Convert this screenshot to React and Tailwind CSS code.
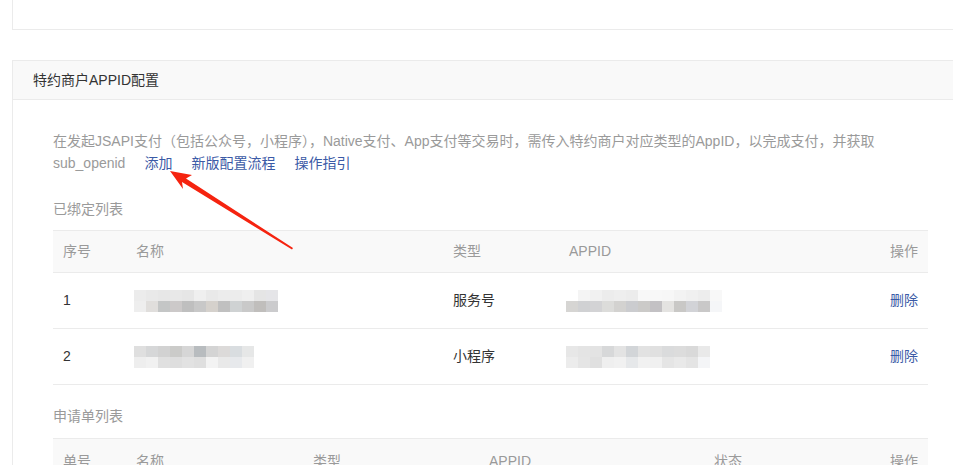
import React from 'react';

const mosaics = {
    name1: {
        top: ['#ececec', '#e9e9e9', '#e7e7e7', '#e8e8e8', '#e6e6e6', '#efefef', '#e9e9e9', '#ececec', '#ececec', '#efefef', '#e5e5e5', '#e5e5e8'],
        bottom: ['#eeeeee', '#e0dedc', '#c4c6c6', '#ccc9c9', '#bfbfbf', '#c8c8c8', '#d5d1cc', '#c0c0c0', '#cfd2d3', '#c9c9c9', '#c0bebc', '#cbcbcd'],
    },
    appid1: {
        top: ['#ffffff', '#f4f4f4', '#f1f1f1', '#ececec', '#eeeeee', '#ececec', '#f8f8f8', '#f8f8f8', '#f7f7f7', '#f3f3f3', '#f0f0f0', '#ededed', '#f8f8f8'],
        bottom: ['#d6d5d3', '#d0d1d3', '#d3d3d5', '#dcdcda', '#d3d2d0', '#cbcccf', '#cbcac8', '#c3c1c4', '#e4e3e1', '#c9c8c6', '#d2d3d7', '#c9c8c8', '#f5f6f8'],
    },
    name2: {
        top: ['#dfdfdf', '#d6d7d8', '#d2d2d2', '#cbcbc9', '#d6d6d6', '#b8bcbf', '#d4d4d4', '#dcdad9', '#d9dde0', '#e6e7e7'],
        bottom: ['#eeeeee', '#f1f1f1', '#e0e0e0', '#dedede', '#e2e2e2', '#dfdfdf', '#f3f3f3', '#e9e9e9', '#e7e9ec', '#f0f0f0'],
    },
    appid2: {
        top: ['#e7e7e7', '#e4e4e4', '#e3e3e3', '#d7d8d9', '#e3e3e3', '#d2d5d8', '#e2e2e2', '#e0e0e0', '#dadbdc', '#dcdcdc', '#d9d9d9', '#e9e9e9'],
        bottom: ['#ececec', '#e5e5e5', '#e0e0e0', '#efefef', '#f1f1f1', '#e6e8ea', '#f1f1f1', '#f0f0f0', '#e5e5e5', '#e9e9e9', '#e4e4e4', '#f4f5f7'],
    },
};

function Mosaic({ data }) {
    return (
        <div className="flex flex-col">
            {[data.top, data.bottom].map((row, i) => (
                <div key={i} className="flex">
                    {row.map((c, j) => (
                        <div key={j} className="w-[12px] h-[11px]" style={{ backgroundColor: c }} />
                    ))}
                </div>
            ))}
        </div>
    );
}

const bound = [
    { no: '1', name: mosaics.name1, type: '服务号', appid: mosaics.appid1 },
    { no: '2', name: mosaics.name2, type: '小程序', appid: mosaics.appid2 },
];

export default function App() {
    return (
        <div className="relative w-[953px] h-[465px] overflow-hidden bg-white text-[14px]" style={{ fontFamily: '"Liberation Sans", "Noto Sans CJK SC", sans-serif' }}>
            <div className="pl-[12px]">
                {/* previous card */}
                <div className="h-[30px] border-l border-b border-[#ebebeb] bg-white" />

                {/* APPID card */}
                <div className="mt-[30px] border-l border-t border-[#ebebeb] w-[960px]">
                    <div className="h-[39px] bg-[#f9f9f9] border-b border-[#ebebeb] flex items-center pl-[20px] text-[#333]">
                        特约商户APPID配置
                    </div>
                    <div className="pl-[40px] pt-[30px]">
                        <div className="w-[875px]">
                            <div className="leading-[22px] text-[#9a9a9a]">
                                <div>在发起JSAPI支付（包括公众号，小程序），Native支付、App支付等交易时，需传入特约商户对应类型的AppID，以完成支付，并获取</div>
                                <div className="flex gap-[19px]">
                                    <span>sub_openid</span>
                                    <a className="text-[#3b5aa6]">添加</a>
                                    <a className="text-[#3b5aa6]">新版配置流程</a>
                                    <a className="text-[#3b5aa6]">操作指引</a>
                                </div>
                            </div>

                            <div className="mt-[24px] leading-[22px] text-[#9a9a9a]">已绑定列表</div>
                            <div className="mt-[10px]">
                                <div className="flex items-center h-[43px] bg-[#f9f9f9] border-t border-b border-[#ebebeb] text-[#9a9a9a]">
                                    <div className="w-[73px] pl-[10px]">序号</div>
                                    <div className="w-[317px] pl-[10px]">名称</div>
                                    <div className="w-[116px] pl-[10px]">类型</div>
                                    <div className="w-[200px] pl-[10px]">APPID</div>
                                    <div className="flex-1 pr-[10px] text-right">操作</div>
                                </div>
                                {bound.map(row => (
                                    <div key={row.no} className="flex items-center h-[56px] border-b border-[#ebebeb] text-[#333]">
                                        <div className="w-[73px] pl-[10px]">{row.no}</div>
                                        <div className="w-[317px] pl-[8px]"><Mosaic data={row.name} /></div>
                                        <div className="w-[116px] pl-[10px]">{row.type}</div>
                                        <div className="w-[200px] pl-[7px]"><Mosaic data={row.appid} /></div>
                                        <div className="flex-1 pr-[10px] text-right text-[#3b5aa6]">删除</div>
                                    </div>
                                ))}
                            </div>

                            <div className="mt-[20px] leading-[22px] text-[#9a9a9a]">申请单列表</div>
                            <div className="mt-[11px]">
                                <div className="flex items-center h-[46px] bg-[#f9f9f9] border-t border-[#ebebeb] text-[#9a9a9a]">
                                    <div className="w-[73px] pl-[10px]">单号</div>
                                    <div className="w-[177px] pl-[10px]">名称</div>
                                    <div className="w-[176px] pl-[10px]">类型</div>
                                    <div className="w-[225px] pl-[10px]">APPID</div>
                                    <div className="w-[120px] pl-[10px]">状态</div>
                                    <div className="flex-1 pr-[10px] text-right">操作</div>
                                </div>
                            </div>
                        </div>
                    </div>
                </div>
            </div>

            {/* red annotation arrow */}
            <svg className="absolute left-0 top-0 pointer-events-none" width="953" height="465" viewBox="0 0 953 465">
                <polygon
                    points="170,171 192,175 186,178.5 293,248 292,249.5 182,182 183,189"
                    fill="#f5230f"
                />
            </svg>
        </div>
    );
}
